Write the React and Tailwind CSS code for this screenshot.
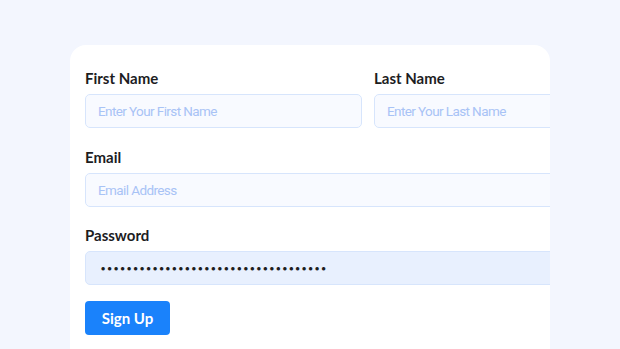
import React from 'react';

const inputCls =
  'w-full h-[34px] rounded-[5px] border border-[#d7e5fc] bg-[#f8faff] px-3 text-[13.5px] tracking-[-0.6px] text-[#1e1e1e] outline-none placeholder:text-[#a8c3f6] font-[Roboto,sans-serif]';

const Field = ({ label, children }) => (
  <div className="flex flex-col gap-[6px]">
    <label className="text-[15px] leading-5 font-bold text-[#1d1d1f] font-[Lato,sans-serif]">{label}</label>
    {children}
  </div>
);

export default function App() {
  return (
    <div className="w-[620px] h-[349px] overflow-hidden bg-[#f3f6fe] pt-[45px] pl-[70px]">
      <div className="w-[480px] h-[320px] bg-white rounded-t-[16px] overflow-hidden pt-[23px] pl-[15px]">
        <div className="w-[566px] flex flex-col gap-[18.5px]">
          <div className="grid grid-cols-2 gap-x-[12px]">
            <Field label="First Name">
              <input className={inputCls} placeholder="Enter Your First Name" />
            </Field>
            <Field label="Last Name">
              <input className={inputCls} placeholder="Enter Your Last Name" />
            </Field>
          </div>
          <Field label="Email">
            <input className={inputCls} placeholder="Email Address" />
          </Field>
          <Field label="Password">
            <input
              type="password"
              defaultValue="12345678901234567890123456789012345"
              className="w-full h-[34px] rounded-[5px] border border-[#d7e5fc] bg-[#e8f0fe] pl-[14px] pr-3 text-[11px] text-[#1e1e1e] outline-none font-[Inter,sans-serif] tracking-[0.3px]"
            />
          </Field>
        </div>
        <button className="mt-[16px] w-[85px] h-[34px] rounded-[4px] bg-[#1a82fb] text-white text-[15px] font-bold font-[Lato,sans-serif]">
          Sign Up
        </button>
      </div>
    </div>
  );
}
